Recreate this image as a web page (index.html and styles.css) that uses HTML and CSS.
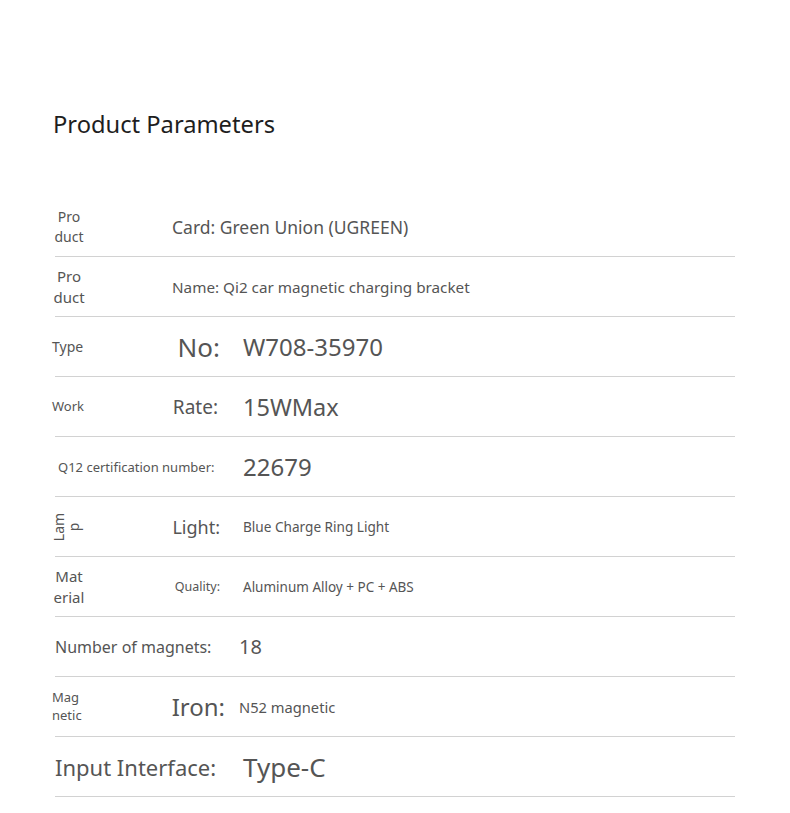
FILE: index.html
```html
<!DOCTYPE html>
<html lang="en">
<head>
<meta charset="utf-8">
<title>Product Parameters</title>
<link rel="stylesheet" href="styles.css">
</head>
<body>
<main class="page">
  <h1 class="title">Product Parameters</h1>
  <div class="params">
    <div class="row">
      <div class="label center s14">Pro<br>duct</div>
      <div class="joined s175">Card: Green Union (UGREEN)</div>
    </div>
    <div class="row">
      <div class="label center s15">Pro<br>duct</div>
      <div class="joined s15b">Name: Qi2 car magnetic charging bracket</div>
    </div>
    <div class="row">
      <div class="label s14">Type</div>
      <div class="key s26">No:</div>
      <div class="value s24">W708-35970</div>
    </div>
    <div class="row">
      <div class="label s13">Work</div>
      <div class="key s19 rate">Rate:</div>
      <div class="value s235">15WMax</div>
    </div>
    <div class="row">
      <div class="wide s13 indent">Q12 certification number:</div>
      <div class="value s24">22679</div>
    </div>
    <div class="row">
      <div class="label"><span class="rotated s14">Lam<br>p</span></div>
      <div class="key s18">Light:</div>
      <div class="value s136">Blue Charge Ring Light</div>
    </div>
    <div class="row">
      <div class="label center s15">Mat<br>erial</div>
      <div class="key s125">Quality:</div>
      <div class="value s135">Aluminum Alloy + PC + ABS</div>
    </div>
    <div class="row">
      <div class="wide s16">Number of magnets:</div>
      <div class="value s20 tight">18</div>
    </div>
    <div class="row">
      <div class="label s13">Mag<br>netic</div>
      <div class="key s24 iron">Iron:</div>
      <div class="value s147 tight">N52 magnetic</div>
    </div>
    <div class="row">
      <div class="wide s22">Input Interface:</div>
      <div class="value s26">Type-C</div>
    </div>
  </div>
</main>
</body>
</html>
```

FILE: styles.css
```css
* { box-sizing: border-box; }
html, body { margin: 0; padding: 0; background: #fff; }
body {
  font-family: "Noto Sans", "Open Sans", sans-serif;
  color: #555;
}
.page {
  padding: 108px 55px 0 55px;
  width: 790px;
}
.title {
  margin: 0 0 57px -2px;
  font-size: 23.7px;
  font-weight: 400;
  line-height: 32px;
  color: #1e1e1e;
}
.params {
  width: 680px;
}
.row {
  display: grid;
  grid-template-columns: 110px 70px 1fr;
  align-items: center;
  height: 60px;
  border-bottom: 1px solid #d2d2d2;
}
.label {
  margin-left: -3px;
  width: 34px;
  line-height: 1.37;
}
.label.center { text-align: center; }
.joined {
  grid-column: 2 / 4;
  padding-left: 7px;
  white-space: nowrap;
}
.key {
  text-align: right;
  padding-right: 15px;
  white-space: nowrap;
}
.key.rate { padding-right: 17px; }
.key.iron { padding-right: 10px; }
.value {
  padding-left: 8px;
  white-space: nowrap;
}
.value.tight { padding-left: 4px; }
.wide {
  grid-column: 1 / 3;
  white-space: nowrap;
}
.wide.indent { padding-left: 3px; }
.rotated {
  display: block;
  width: 30px;
  text-align: center;
  line-height: 15px;
  transform: rotate(-90deg);
  margin-left: -1px;
}
.s125 { font-size: 12.5px; }
.s13 { font-size: 13px; }
.s135 { font-size: 13.5px; }
.s136 { font-size: 13.6px; }
.s14 { font-size: 14px; }
.s147 { font-size: 14.7px; }
.s15 { font-size: 15px; }
.s15b { font-size: 15.25px; }
.s16 { font-size: 16px; }
.s175 { font-size: 17.5px; }
.s18 { font-size: 18px; }
.s19 { font-size: 19px; }
.s20 { font-size: 20px; }
.s22 { font-size: 22px; }
.s235 { font-size: 23.5px; }
.s24 { font-size: 24px; }
.s26 { font-size: 26px; }
```
